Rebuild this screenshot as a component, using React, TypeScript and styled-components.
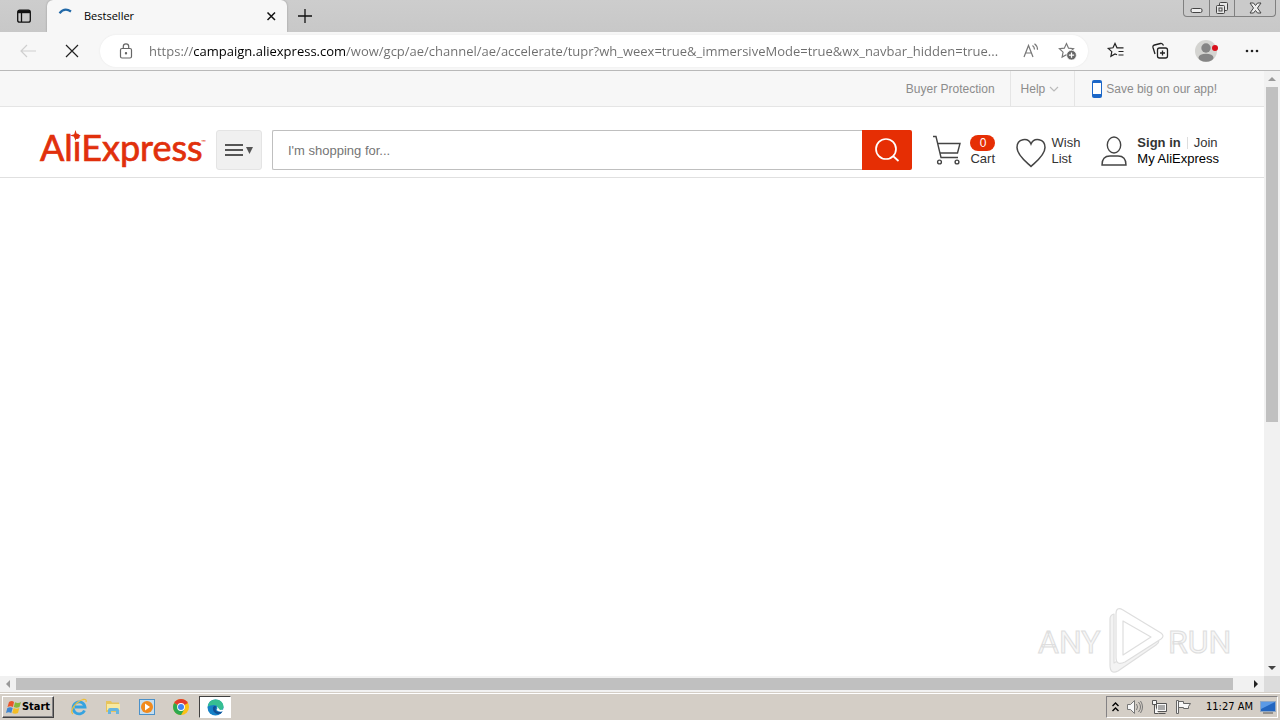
import React from "react";
import styled, { createGlobalStyle } from "styled-components";

const GlobalStyle = createGlobalStyle`
  *, *::before, *::after { box-sizing: border-box; }
  body { margin: 0; background: #fff; font-family: "Liberation Sans", Arial, sans-serif; }
  button, input { font: inherit; color: inherit; margin: 0; padding: 0; border: 0; background: none; outline: 0; border-radius: 0; }
  a { color: inherit; text-decoration: none; }
  svg { display: block; flex: none; overflow: visible; }
`;

const Desktop = styled.div`
  min-height: 100vh;
  display: flex;
  flex-direction: column;
`;

const TabStrip = styled.div`
  display: flex;
  height: 32px;
  background: linear-gradient(#cdcdcd, #c8c8c8);
`;

const StripButton = styled.button<{ $width: number }>`
  width: ${(p) => p.$width}px;
  display: flex;
  align-items: center;
  justify-content: center;
`;

const Tab = styled.div`
  width: 240px;
  display: flex;
  align-items: center;
  gap: 11px;
  padding: 0 9px 0 10px;
  background: #f7f7f7;
  border-radius: 6px 6px 0 0;
  box-shadow: 0 0 2px #8f8f8f;
  clip-path: inset(0 -3px 0 -3px);
`;

const TabTitle = styled.span`
  flex: 1;
  font: 11px/16px "Open Sans", sans-serif;
  color: #000;
`;

const PlainButton = styled.button`
  display: flex;
  align-items: center;
  justify-content: center;
`;

const Caption = styled.div`
  margin-left: auto;
  margin-right: 4px;
  height: 17px;
  display: flex;
  border: 1px solid #808080;
  border-top: 0;
  border-radius: 0 0 4px 4px;
  background: #cacaca;
`;

const CaptionButton = styled(PlainButton)<{ $width: number }>`
  width: ${(p) => p.$width}px;
  & + & { border-left: 1px solid #808080; }
`;

const Toolbar = styled.div`
  display: flex;
  align-items: center;
  height: 39px;
  padding: 0 6px 0 12px;
  background: #f7f7f7;
  border-bottom: 1px solid #b9b9b9;
`;

const ToolButton = styled(PlainButton)<{ $width: number }>`
  width: ${(p) => p.$width}px;
  height: 32px;
  flex: none;
`;

const AddressBar = styled.div`
  flex: 1;
  min-width: 0;
  height: 32px;
  margin-right: 6px;
  padding: 0 8px 0 17px;
  display: flex;
  align-items: center;
  gap: 14px;
  background: #fff;
  border-radius: 16px;
  box-shadow: 0 0 2px #e6e6e6;
`;

const AddressInput = styled.input`
  flex: 1;
  min-width: 0;
  height: 24px;
  font: 13px/24px "Open Sans", sans-serif;
  color: transparent;
  background: linear-gradient(90deg, #6d6d6d 44px, #000 44px, #000 196px, #6d6d6d 196px);
  background-clip: text;
  -webkit-background-clip: text;
`;

const Viewport = styled.div`
  flex: 1;
  display: flex;
  min-height: 0;
`;

const Page = styled.main`
  flex: 1;
  min-width: 0;
  position: relative;
  background: #fff;
`;

const TopBar = styled.nav`
  display: flex;
  justify-content: flex-end;
  height: 36px;
  padding-right: 32px;
  background: #f7f7f7;
  border-bottom: 1px solid #e5e5e5;
  font-size: 12px;
  line-height: 16px;
  color: #8c8c8c;
`;

const TopLink = styled.a<{ $left: number }>`
  display: flex;
  align-items: center;
  gap: 4px;
  padding: 1px 15px 0 ${(p) => p.$left}px;
  & + & { border-left: 1px solid #e5e5e5; }
`;

const Header = styled.header`
  display: flex;
  align-items: center;
  height: 71px;
  padding: 15px 45px 0 40px;
  border-bottom: 1px solid #e0e0e0;
  font-size: 13px;
  line-height: 16px;
  color: #333;
`;

const Logo = styled.a`
  width: 166px;
  flex: none;
`;

const MenuButton = styled(PlainButton)`
  width: 46px;
  height: 40px;
  flex: none;
  margin: 0 10px;
  gap: 3px;
  background: #f0f0f0;
  border: 1px solid #e4e4e4;
  border-radius: 3px;
`;

const SearchForm = styled.form`
  flex: 1;
  min-width: 0;
  display: flex;
  height: 40px;
`;

const SearchInput = styled.input`
  flex: 1;
  min-width: 0;
  padding: 2px 15px 0;
  border: 1px solid #bfbfbf;
  border-right: 0;
  border-radius: 2px 0 0 2px;
  background: #fff;
  &::placeholder { color: #757575; opacity: 1; }
`;

const SearchButton = styled(PlainButton)`
  width: 50px;
  background: #e62e04;
  border-radius: 0 2px 2px 0;
`;

const HeaderItem = styled.div<{ $gap: number }>`
  display: flex;
  align-items: center;
  gap: ${(p) => p.$gap}px;
  margin-left: 21px;
  flex: none;
`;

const Stack = styled.span`
  display: flex;
  flex-direction: column;
  padding-top: 2px;
`;

const Badge = styled.span`
  width: 25px;
  height: 16px;
  border-radius: 8px;
  background: #e62e04;
  color: #fff;
  font-size: 12px;
  text-align: center;
`;

const SignRow = styled.span`
  display: flex;
  align-items: center;
`;

const Divider = styled.span`
  width: 1px;
  height: 12px;
  margin: 0 6px;
  background: #ddd;
`;

const MyLink = styled.a`
  color: #000;
`;

const Watermark = styled.div`
  position: absolute;
  right: 30px;
  bottom: 2px;
`;

const VScroll = styled.div`
  width: 16px;
  display: flex;
  flex-direction: column;
  background: #f1f1f1;
`;

const HScroll = styled.div`
  height: 16px;
  display: flex;
  background: #f1f1f1;
`;

const ScrollArrow = styled(PlainButton)`
  width: 16px;
  height: 16px;
  flex: none;
`;

const Track = styled.div<{ $vertical?: boolean }>`
  flex: 1;
  display: flex;
  flex-direction: ${(p) => (p.$vertical ? "column" : "row")};
  padding: ${(p) => (p.$vertical ? "0 2px" : "2px 0")};
`;

const Thumb = styled.div<{ $share: number }>`
  flex: 0 0 ${(p) => p.$share}%;
  background: #c0c0c0;
`;

const Corner = styled.div`
  width: 16px;
  background: #dcdcdc;
`;

const Taskbar = styled.footer`
  height: 28px;
  display: flex;
  align-items: center;
  padding: 2px 2px 0 2px;
  background: #d4cec6;
  box-shadow: inset 0 1px #d4cec6, inset 0 2px #fff;
`;

const StartButton = styled(PlainButton)`
  width: 52px;
  height: 22px;
  border: 1px solid;
  border-color: #fff #404040 #404040 #fff;
  box-shadow: inset -1px -1px #848284;
  font: bold 11px/16px "DejaVu Sans Condensed", "DejaVu Sans", sans-serif;
  color: #000;
`;

const Quick = styled.div`
  display: flex;
  margin-left: 9px;
  gap: 2px;
`;

const QuickButton = styled(PlainButton)<{ $active?: boolean }>`
  width: 32px;
  height: 22px;
  border: 1px solid;
  border-color: ${(p) => (p.$active ? "#404040 #fff #fff #404040" : "transparent")};
  background: ${(p) => (p.$active ? "#fff" : "none")};
`;

const Tray = styled.div`
  margin-left: auto;
  height: 22px;
  display: flex;
  align-items: center;
  gap: 7px;
  padding: 0 1px 0 5px;
  border: 1px solid;
  border-color: #848284 #fff #fff #848284;
`;

const Clock = styled.time`
  margin-left: 7px;
  font: 11px/16px "DejaVu Sans Condensed", sans-serif;
  color: #000;
`;

const star = "M8 1.5l2 4.300 4.700.6-3.500 3.200.9 4.700L8 12l-4.100 2.300.9-4.700L1.300 6.400 6 5.800z";

export default function App() {
  return (
    <Desktop>
      <GlobalStyle />
      <TabStrip>
        <StripButton $width={47} aria-label="Tab actions">
          <svg width="16" height="16" viewBox="0 0 16 16" fill="none" stroke="#111" strokeWidth="1.300">
            <rect x="1.700" y="2.200" width="12.600" height="12" rx="2" />
            <path d="M2 3.700h12" strokeWidth="3" />
            <path d="M5.500 5v9" />
          </svg>
        </StripButton>
        <Tab>
          <svg width="16" height="16" viewBox="0 0 16 16" fill="none" stroke="#2269a8" strokeWidth="2.200">
            <path d="M2.500 5.200Q7.500-.8 14 3.500" />
          </svg>
          <TabTitle>Bestseller</TabTitle>
          <PlainButton aria-label="Close tab">
            <svg width="14" height="14" viewBox="0 0 14 14" stroke="#111" strokeWidth="1.500">
              <path d="M3.500 3.500l7.500 7.500M11 3.500l-7.500 7.500" />
            </svg>
          </PlainButton>
        </Tab>
        <StripButton $width={35} aria-label="New tab">
          <svg width="16" height="16" viewBox="0 0 16 16" stroke="#111" strokeWidth="1.300">
            <path d="M8 1v14M1 8h14" />
          </svg>
        </StripButton>
        <Caption>
          <CaptionButton $width={25} aria-label="Minimize">
            <svg width="13" height="13" viewBox="0 0 13 13" fill="#eee" stroke="#444">
              <rect x="1" y="6.500" width="11" height="4" rx="1.500" />
            </svg>
          </CaptionButton>
          <CaptionButton $width={25} aria-label="Restore">
            <svg width="14" height="14" viewBox="0 0 14 14" fill="#e6e6e6" stroke="#444">
              <rect x="4.500" y="1.500" width="8" height="8" rx="1" />
              <rect x="1.500" y="4.500" width="8" height="8" rx="1" />
              <rect x="4" y="7" width="3" height="3" />
            </svg>
          </CaptionButton>
          <CaptionButton $width={41} aria-label="Close">
            <svg width="13" height="12" viewBox="0 0 13 12" fill="#eee" stroke="#444">
              <path d="M1 1h3.500l2 2.500 2-2.500H12L8.500 6l3.500 5H8.500l-2-2.500-2 2.500H1l3.500-5z" />
            </svg>
          </CaptionButton>
        </Caption>
      </TabStrip>

      <Toolbar>
        <ToolButton $width={32} aria-label="Back">
          <svg width="18" height="16" viewBox="0 0 18 16" fill="none" stroke="#cfcfcf" strokeWidth="1.200">
            <path d="M17 8H2M8 2L2 8l6 6" />
          </svg>
        </ToolButton>
        <ToolButton $width={56} aria-label="Stop">
          <svg width="14" height="14" viewBox="0 0 14 14" stroke="#222" strokeWidth="1.200">
            <path d="M1 1l12 12M13 1L1 13" />
          </svg>
        </ToolButton>
        <AddressBar>
          <svg width="18" height="18" viewBox="0 0 18 18" fill="none" stroke="#666" strokeWidth="1.200">
            <rect x="3.500" y="6.500" width="11" height="9.500" rx="1.500" />
            <path d="M6.300 6.500V4.500a2.700 2.700 0 0 1 5.400 0v2" />
            <circle cx="9" cy="11.200" r="0.600" fill="#666" />
          </svg>
          <AddressInput
            aria-label="Address"
            spellCheck={false}
            defaultValue="https://campaign.aliexpress.com/wow/gcp/ae/channel/ae/accelerate/tupr?wh_weex=true&_immersiveMode=true&wx_navbar_hidden=true..."
          />
          <ToolButton $width={18} aria-label="Read aloud">
            <svg width="18" height="16" viewBox="0 0 18 16" fill="none" stroke="#777" strokeWidth="1.200">
              <path d="M2 14L6.500 2.500 11 14M3.600 10h5.800M10.500 2.500q2 1.500 2 4M12.500.8q3 2.200 3 6" />
            </svg>
          </ToolButton>
          <ToolButton $width={26} aria-label="Add to favorites">
            <svg width="19" height="19" viewBox="0 0 18 18">
              <path d={star} fill="none" stroke="#777" strokeWidth="1.100" />
              <circle cx="12.800" cy="12.500" r="4.600" fill="#666" stroke="#fff" strokeWidth=".7" />
              <path d="M12.800 10v5M10.300 12.500h5" stroke="#fff" strokeWidth="1.200" />
            </svg>
          </ToolButton>
        </AddressBar>
        <ToolButton $width={44} aria-label="Favorites">
          <svg width="18" height="18" viewBox="0 0 18 18" fill="none" stroke="#222" strokeWidth="1.200">
            <path d="M10 12.800l-2-.8-4.100 2.300.9-4.700L1.300 6.400 6 5.800l2-4.300 2 4.300h6.500M11.500 9.500h5M11.500 13h5" />
          </svg>
        </ToolButton>
        <ToolButton $width={44} aria-label="Collections">
          <svg width="18" height="18" viewBox="0 0 18 18" fill="none" stroke="#222" strokeWidth="1.300">
            <rect x="6.500" y="6" width="10" height="10" rx="2" />
            <path d="M11.500 8.500v5M9 11h5M4 12L2 5.500Q1.500 3.500 3.500 3l6-1.500Q11.500 1 12.500 3.500" />
          </svg>
        </ToolButton>
        <ToolButton $width={48} aria-label="Profile">
          <svg width="24" height="24" viewBox="0 0 24 24">
            <circle cx="12" cy="12" r="11" fill="#d4d4d1" />
            <circle cx="12" cy="9" r="4.700" fill="#858585" />
            <ellipse cx="12" cy="18.700" rx="7.500" ry="4" fill="#858585" />
            <circle cx="21" cy="9" r="3" fill="#d9101c" />
          </svg>
        </ToolButton>
        <ToolButton $width={44} aria-label="Settings and more">
          <svg width="16" height="4" viewBox="0 0 16 4" fill="#222">
            <circle cx="3" cy="2" r="1.300" /><circle cx="8" cy="2" r="1.300" /><circle cx="13" cy="2" r="1.300" />
          </svg>
        </ToolButton>
      </Toolbar>

      <Viewport>
        <Page>
          <TopBar>
            <TopLink href="#" $left={10}>Buyer Protection</TopLink>
            <TopLink href="#" $left={10}>
              Help
              <svg width="10" height="8" viewBox="0 0 10 8" fill="none" stroke="#bbb" strokeWidth="1.200"><path d="M1 2l4 4 4-4" /></svg>
            </TopLink>
            <TopLink href="#" $left={17}>
              <svg width="10" height="18" viewBox="0 0 10 18">
                <rect width="10" height="18" rx="2" fill="#1c67c8" />
                <rect x="1" y="3" width="8" height="11" fill="#fff" />
              </svg>
              Save big on our app!
            </TopLink>
          </TopBar>
          <Header>
            <Logo href="#" aria-label="AliExpress">
              <svg width="166" height="42" viewBox="0 0 166 42" fill="#e1300c">
                <text x="0" y="32" fontFamily="Lato, sans-serif" fontSize="36" stroke="#e1300c" strokeWidth="0.700">AliExpress</text>
                <path d="M35.500 1l1.300 4.200L41 6.500l-4.200 1.300L35.500 12l-1.300-4.200L30 6.500l4.200-1.300z" />
                <text x="161" y="15" fontFamily="Lato, sans-serif" fontSize="6">™</text>
              </svg>
            </Logo>
            <MenuButton aria-label="Categories">
              <svg width="18" height="14" viewBox="0 0 18 14" stroke="#555" strokeWidth="2"><path d="M0 2h18M0 7h18M0 12h18" /></svg>
              <svg width="7" height="8" viewBox="0 0 7 8" fill="#555"><path d="M0 1h7L3.500 8z" /></svg>
            </MenuButton>
            <SearchForm onSubmit={(e) => e.preventDefault()}>
              <SearchInput aria-label="Search" placeholder="I'm shopping for..." />
              <SearchButton aria-label="Search">
                <svg width="26" height="26" viewBox="0 0 26 26" fill="none" stroke="#fff" strokeWidth="1.700">
                  <circle cx="12" cy="12" r="10" /><path d="M19 19l5.500 5" />
                </svg>
              </SearchButton>
            </SearchForm>
            <HeaderItem $gap={9}>
              <svg width="28" height="30" viewBox="0 0 28 30" fill="none" stroke="#444" strokeWidth="1.400">
                <path d="M0 1.500h3L8 22.500h17M4.500 8.500h22.500L24.500 18H6.700" />
                <circle cx="6.500" cy="27" r="1.900" /><circle cx="24" cy="27" r="1.900" />
              </svg>
              <Stack><Badge>0</Badge><a href="#">Cart</a></Stack>
            </HeaderItem>
            <HeaderItem $gap={5}>
              <svg width="30" height="30" viewBox="0 0 30 30" fill="none" stroke="#444" strokeWidth="1.500">
                <path d="M15 30.500C11 26.500 1 19.500 1 11.500C1 2.500 12 1 15 8C18 1 29 2.500 29 11.500C29 19.500 19 26.500 15 30.500z" transform="translate(0 1)" />
              </svg>
              <a href="#"><Stack><span>Wish</span><span>List</span></Stack></a>
            </HeaderItem>
            <HeaderItem $gap={10}>
              <svg width="26" height="32" viewBox="0 0 26 32" fill="none" stroke="#444" strokeWidth="1.400">
                <ellipse cx="13" cy="11" rx="6.700" ry="8" />
                <path d="M1 31q0-9 8-9h8q8 0 8 9z" />
              </svg>
              <Stack>
                <SignRow><a href="#"><b>Sign in</b></a><Divider /><a href="#">Join</a></SignRow>
                <MyLink href="#">My AliExpress</MyLink>
              </Stack>
            </HeaderItem>
          </Header>
          <Watermark>
            <svg width="200" height="68" viewBox="0 0 200 68">
              <g fontFamily="Roboto, sans-serif" fontSize="32" fill="#f6f6f6" stroke="#dedede" strokeWidth="1">
                <text x="4" y="47">ANY</text>
                <text x="134" y="47">RUN</text>
              </g>
              <g fill="#fff" stroke="#dedede" strokeWidth="1.200" strokeLinejoin="round">
                <path d="M76 13q0-4 4-5v49l41-25q7 3 1 7L84 65q-8 4-8-6z" fill="#f3f3f3" />
                <path d="M82 8q0-8 7-4l38 23q4 3 0 6L91 56q-9 4-9-4zM89 15v34l28-18z" fillRule="evenodd" />
              </g>
            </svg>
          </Watermark>
        </Page>
        <VScroll>
          <ScrollArrow aria-label="Scroll up"><svg width="8" height="4" fill="#999"><path d="M0 4L4 0l4 4z" /></svg></ScrollArrow>
          <Track $vertical><Thumb $share={58.5} /></Track>
          <ScrollArrow aria-label="Scroll down"><svg width="8" height="4" fill="#444"><path d="M0 0h8L4 4z" /></svg></ScrollArrow>
        </VScroll>
      </Viewport>
      <HScroll>
        <ScrollArrow aria-label="Scroll left"><svg width="4" height="8" fill="#999"><path d="M4 0v8L0 4z" /></svg></ScrollArrow>
        <Track><Thumb $share={98.8} /></Track>
        <ScrollArrow aria-label="Scroll right"><svg width="4" height="8" fill="#222"><path d="M0 0v8l4-4z" /></svg></ScrollArrow>
        <Corner />
      </HScroll>

      <Taskbar>
        <StartButton>
          <svg width="16" height="15" viewBox="0 0 16 15">
            <path d="M3 2q3-2 5 0L7 7Q4.500 5.500 1.500 7z" fill="#e9562b" />
            <path d="M9 2.300q3 1.500 6-.3L13.500 7q-3 1.500-5.700 0z" fill="#86b83b" />
            <path d="M1.300 8q3-1.500 5.400 0l-1.400 5q-2.500-1.600-5.300 0z" fill="#3f86d0" />
            <path d="M7.600 8q3 1.500 5.700 0L12 13q-3 1.500-5.700 0z" fill="#f4bd25" />
          </svg>
          Start
        </StartButton>
        <Quick>
          <QuickButton aria-label="Internet Explorer">
            <svg width="18" height="18" viewBox="0 0 18 18" fill="none">
              <path d="M14.500 12.500A6 6 0 1 1 15 9H5" stroke="#35a3e0" strokeWidth="2.800" />
              <path d="M3 16C-1 14 5 4 13 1.500q4-1 3 2.500" stroke="#edbf3a" strokeWidth="1.300" />
            </svg>
          </QuickButton>
          <QuickButton aria-label="Explorer">
            <svg width="18" height="18" viewBox="0 0 18 18">
              <path d="M2 3h5l1 1.500h7V14H2z" fill="#e7c45c" />
              <path d="M3 6h13v6H3z" fill="#f8e9a0" />
              <path d="M4 16v-4q0-2 2-2h7q2 0 2 2v4h-3v-3H7v3z" fill="#67b5df" />
            </svg>
          </QuickButton>
          <QuickButton aria-label="Media Player">
            <svg width="18" height="18" viewBox="0 0 18 18">
              <rect x="1.500" y="1.500" width="15" height="15" fill="#c5def0" stroke="#4b91c9" />
              <circle cx="9" cy="9" r="6" fill="#f18a1d" />
              <path d="M7 5.500v7l5-3.500z" fill="#fff" />
            </svg>
          </QuickButton>
          <QuickButton aria-label="Chrome">
            <svg width="16" height="16" viewBox="0 0 16 16">
              <circle cx="8" cy="8" r="8" fill="#fbc116" />
              <path d="M8 8L1.100 4A8 8 0 0 1 14.900 4z" fill="#e33b2e" />
              <path d="M8 8L1.100 4A8 8 0 0 0 8 16l3.500-6z" fill="#2da94f" />
              <circle cx="8" cy="8" r="3.900" fill="#fff" /><circle cx="8" cy="8" r="3" fill="#4184f3" />
            </svg>
          </QuickButton>
          <QuickButton $active aria-label="Edge">
            <svg width="17" height="17" viewBox="0 0 17 17">
              <circle cx="8.500" cy="8.500" r="8" fill="#1681c7" />
              <path d="M.6 7.500Q2 .5 8.500.5c5 0 8 3.500 8 7 0 4-5 5-7 3.500 2-2 1-5-2.500-5q-4 0-6.400 1.500z" fill="#36bf92" />
              <path d="M6 8q-1 5 4 7 4 .5 5.500-2.500-7 2-7-3 1.500-3-1-2.500z" fill="#134f94" />
              <path d="M9.500 11q1.500-1.500.5-3.500l3 3.500 4-.5-.8 1.800q-4.200 1.200-6.700-1.300z" fill="#fff" />
            </svg>
          </QuickButton>
        </Quick>
        <Tray>
          <svg width="7" height="10" viewBox="0 0 7 10" fill="none" stroke="#000" strokeWidth="1.400"><path d="M.5 4l3-3 3 3M.5 9l3-3 3 3" /></svg>
          <svg width="18" height="16" viewBox="0 0 18 16" fill="#f8f8f8" stroke="#777">
            <path d="M1.500 5.500h3l4-4v13l-4-4h-3z" /><path d="M10.500 5q2 3 0 6M12.500 3q4 5 0 10M14.500 2q4 6 0 12" fill="none" />
          </svg>
          <svg width="17" height="16" viewBox="0 0 17 16" fill="#f8f8f8" stroke="#555">
            <path d="M5.500 4.500h10v8h-10zM7.500 14.500h7" /><path d="M7 6h7v5H7z" fill="#aaa" stroke="none" />
            <path d="M1.500 1.500h4v4h-4zM3.500 5.500v9h4" />
          </svg>
          <svg width="17" height="16" viewBox="0 0 17 16" fill="#f8f8f8" stroke="#666">
            <path d="M1.500 1.500h2v13h-2zM3.500 2.500h5v2h7l-2 3 0 2h-5v-1h-5z" />
          </svg>
          <Clock>11:27 AM</Clock>
          <svg width="16" height="14" viewBox="0 0 16 14"><rect x=".5" y="1.500" width="15" height="10" fill="#2366c0" stroke="#8fa7c4" /><path d="M1 2h14L1 9z" fill="#5b9ae6" /><path d="M3 13h10" stroke="#555" /></svg>
        </Tray>
      </Taskbar>
    </Desktop>
  );
}
